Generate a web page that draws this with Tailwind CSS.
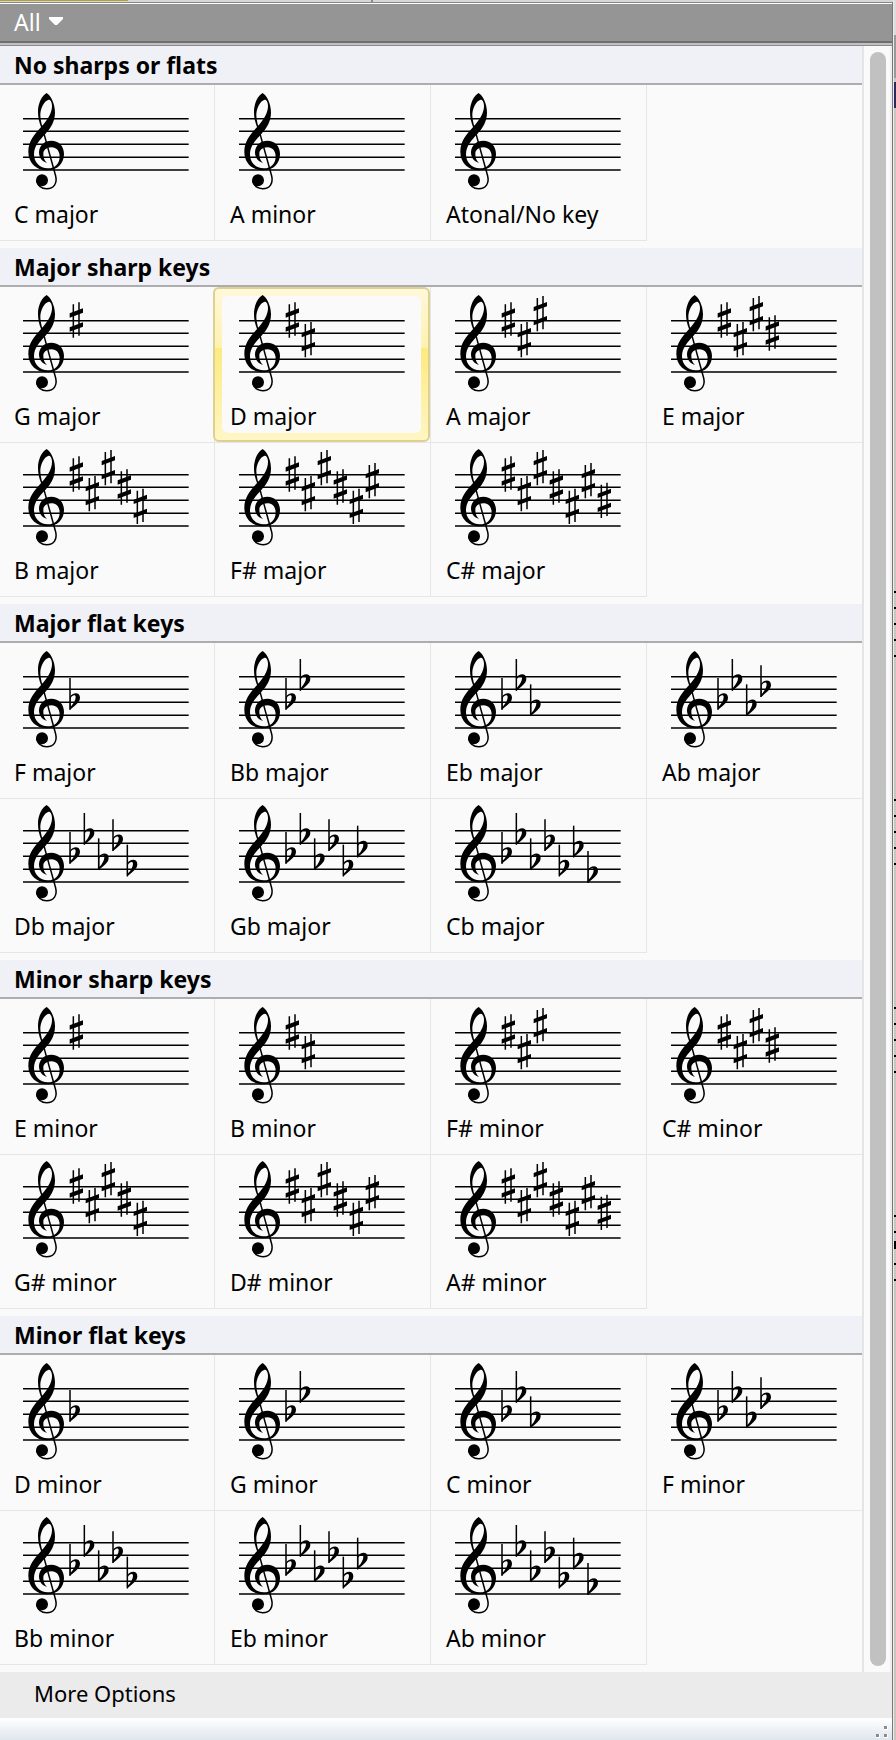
<!DOCTYPE html>
<html lang="en">
  <head>
    <meta charset="UTF-8" />
    <meta name="viewport" content="width=device-width, initial-scale=1.0" />
    <title>Key Signature</title>
    <script src="https://cdn.jsdelivr.net/npm/@tailwindcss/browser@4"></script>
  </head>
  <body class="font-['Noto_Sans','Open_Sans',sans-serif] text-black">
    <!-- Shared music glyphs, drawn at three units per pixel -->
    <svg class="hidden">
      <defs>
        <g id="staff">
          <path d="M0 80H497M0 118H497M0 157H497M0 196H497M0 234H497" stroke="#000" stroke-width="4.5" />
          <g transform="translate(-39 -36)">
            <path d="M110 39C122 46 135 70 135 97C135 127 121 146 106 162C88 181 72 198 72 223C72 248 90 265 113 265C136 265 149 249 149 230C149 213 140 202 124 202C108 202 100 211 100 222C100 235 104 243 111 249C97 245 87 234 87 217C87 196 104 182 124 182C146 182 162 198 162 222C162 250 142 271 112 271C80 271 55 250 55 215C55 184 72 164 96 138C112 120 126 100 126 78C126 67 122 59 116 59C103 62 91 84 91 105C91 116 94 128 97 140L93 141C87 126 84 111 84 95C84 70 96 46 110 39Z" />
            <path d="M95 136L137 288C142 310 132 326 110 326C94 326 84 318 80 303" fill="none" stroke="#000" stroke-width="4.5" />
            <circle cx="96" cy="301" r="18" />
          </g>
        </g>
        <g id="sharp">
          <path d="M-9 -47V53M8 -53V47" stroke="#000" stroke-width="4.5" />
          <path d="M-20 -20L20 -35V-22L-20 -7ZM-20 22L20 7V20L-20 35Z" />
        </g>
        <g id="flat">
          <path d="M0 -73V22" stroke="#000" stroke-width="4.5" />
          <path fill-rule="evenodd" d="M0 -17C7 -30 30 -33 30 -14C30 1 14 9 -1 23ZM2 -13V13C12 3 17 -8 17 -16C17 -24 7 -23 2 -13Z" />
        </g>
      </defs>
    </svg>

    <div class="flex">
      <div class="min-w-0 flex-1">
        <!-- Sliver of the window behind -->
        <div class="flex h-[2px] bg-[#d6d6d4]">
          <div class="h-px w-32 bg-[#b5a136]"></div>
          <div class="ml-[243px] w-0.5 bg-[#8a8a8a]"></div>
        </div>

        <div class="border-r border-[#777] bg-[#fafafa]">
          <header class="border-t border-[#888]">
            <div class="border-t border-b-2 border-t-white border-b-[#6f6f6f] bg-[#959595]">
              <button type="button" class="flex h-[37px] items-center gap-2 pl-3.5 text-[23px] text-white">
                All
                <svg class="mb-1 h-2 w-3.5" viewBox="0 0 14 8" fill="currentColor"><path d="M0 0H14V2L8 8H6L0 2Z" /></svg>
              </button>
            </div>
            <div class="h-[3px] border-b border-[#8c8c90] bg-[#c0c0c2]"></div>
          </header>

          <div class="flex">
            <main id="palette" class="min-w-0 flex-1 overflow-hidden"></main>
            <div class="w-[30px] border-r-2 border-l-2 border-r-[#eeeeee] border-l-[#e5e5e5] py-1.5 pl-1.5">
              <div class="h-full w-4 rounded-full bg-[#c1c1c1]"></div>
            </div>
          </div>

          <button type="button" class="block h-[46px] w-full bg-[#ebebeb] pb-1 pl-[34px] text-left text-[22px]">More Options</button>
          <footer class="flex h-[22px] items-end justify-end bg-linear-to-b from-white to-[#dfe6ed] pr-1 pb-0.5">
            <svg class="h-3 w-3" viewBox="0 0 12 12">
              <path d="M8 0h4v4h-4zM0 8h4v4h-4zM8 8h4v4h-4z" fill="#fff" />
              <path d="M8 0h3v3h-3zM0 8h3v3h-3zM8 8h3v3h-3z" fill="#8a8a8a" />
            </svg>
          </footer>
        </div>
      </div>

      <!-- Edge of the score behind the panel -->
      <div class="w-[3px] overflow-hidden border-l border-[#ececec] bg-[#cbc5c0]">
        <svg class="h-[1320px] w-0.5" viewBox="0 0 2 1320">
          <path d="M0 0h2v35h-2z" fill="#dcdcde" />
          <path d="M0 35h2v43h-2z" fill="#999" />
          <path d="M0 82h2v26h-2z" fill="#33265c" />
          <path d="M0 592H2M0 608H2M0 624H2M0 640H2M0 656H2M0 800H2M0 816H2M0 832H2M0 848H2M0 864H2M0 1008H2M0 1024H2M0 1040H2M0 1056H2M0 1072H2M0 1216H2M0 1232H2M0 1264H2M0 1280H2" stroke="#000" stroke-width="2" />
          <path d="M0 1241h2v8h-2z" />
        </svg>
      </div>
    </div>

    <script>
      // Each key: [name, number of accidentals]
      const sections = [
        { title: "No sharps or flats", glyph: "sharp", keys: [["C major", 0], ["A minor", 0], ["Atonal/No key", 0]] },
        { title: "Major sharp keys", glyph: "sharp", keys: [["G major", 1], ["D major", 2], ["A major", 3], ["E major", 4], ["B major", 5], ["F# major", 6], ["C# major", 7]] },
        { title: "Major flat keys", glyph: "flat", keys: [["F major", 1], ["Bb major", 2], ["Eb major", 3], ["Ab major", 4], ["Db major", 5], ["Gb major", 6], ["Cb major", 7]] },
        { title: "Minor sharp keys", glyph: "sharp", keys: [["E minor", 1], ["B minor", 2], ["F# minor", 3], ["C# minor", 4], ["G# minor", 5], ["D# minor", 6], ["A# minor", 7]] },
        { title: "Minor flat keys", glyph: "flat", keys: [["D minor", 1], ["G minor", 2], ["C minor", 3], ["F minor", 4], ["Bb minor", 5], ["Eb minor", 6], ["Ab minor", 7]] },
      ];
      const selected = "D major";

      const layout = {
        sharp: { x: 160, dx: 48, y: [78, 137, 59, 117, 175, 98, 157] },
        flat: { x: 141, dx: 43, y: [157, 100, 176, 119, 195, 138, 214] },
      };

      function accidentals(glyph, count) {
        const { x, dx, y } = layout[glyph];
        return y
          .slice(0, count)
          .map((top, i) => `<use href="#${glyph}" x="${x + i * dx}" y="${top}" />`)
          .join("");
      }

      function cell([name, count], i, glyph) {
        const size = i < 4 ? "h-[156px] pt-[7px]" : "h-[154px] pt-[5px]";
        const ring =
          name === selected
            ? `<span class="absolute inset-0 -left-0.5 rounded-md border-2 border-[#dcd191] bg-[linear-gradient(#fff8da,#fff2b0_39%,#fdea80_39%,#fff6c4)] p-[7px]"><span class="block h-full rounded-md bg-[#fafafa]"></span></span>`
            : "";
        return `
          <button type="button" aria-pressed="${name === selected}" class="relative flex flex-col items-start border-r border-b border-[#e6e6e6] pl-[15px] ${size}">
            ${ring}
            <svg class="relative ml-[9px] h-[99px] w-[166px]" viewBox="0 0 498 297">
              <use href="#staff" />${accidentals(glyph, count)}
            </svg>
            <span class="relative mt-2 text-[23px] leading-[30px]">${name}</span>
          </button>`;
      }

      document.getElementById("palette").innerHTML = sections
        .map(
          ({ title, glyph, keys }) => `
        <section class="pb-[7px]">
          <h2 class="h-[39px] border-b-2 border-[#adadaf] bg-[#f0f1f6] pl-3.5 text-[23px] leading-[38px] font-bold">${title}</h2>
          <div class="-mx-px grid grid-cols-4">${keys.map((key, i) => cell(key, i, glyph)).join("")}</div>
        </section>`
        )
        .join("");
    </script>
  </body>
</html>
